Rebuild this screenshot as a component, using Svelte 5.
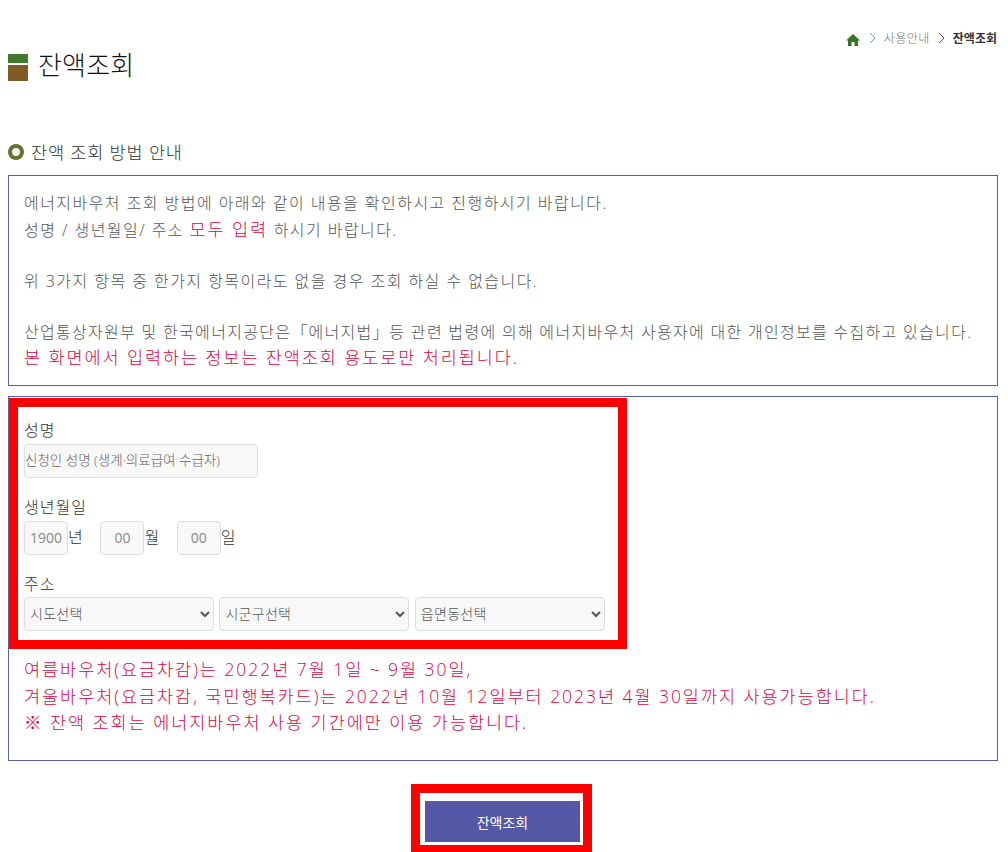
<script>
    const dateFields = [
        { value: '1900', unit: '년' },
        { value: '00', unit: '월' },
        { value: '00', unit: '일' }
    ];
    const selects = ['시도선택', '시군구선택', '읍면동선택'];
</script>

<div class="page">
    <nav class="crumbs">
        <svg class="home" viewBox="0 0 14 12" width="14" height="12"><path d="M7 0 L14 6.5 L12 6.5 L12 12 L8.5 12 L8.5 8 L5.5 8 L5.5 12 L2 12 L2 6.5 L0 6.5 Z" fill="#3a7228"/></svg>
        <svg class="sep" viewBox="0 0 7 12" width="7" height="12"><path d="M1 1 L6 6 L1 11" fill="none" stroke="#6a9ac8" stroke-width="1"/></svg>
        <span class="crumb">사용안내</span>
        <svg class="sep" viewBox="0 0 7 12" width="7" height="12"><path d="M1 1 L6 6 L1 11" fill="none" stroke="#8a3a8a" stroke-width="1"/></svg>
        <span class="crumb current">잔액조회</span>
    </nav>

    <h1><span class="mark"><i></i><b></b></span>잔액조회</h1>

    <h2><span class="ring"></span>잔액 조회 방법 안내</h2>

    <section class="box info">
        <p>에너지바우처 조회 방법에 아래와 같이 내용을 확인하시고 진행하시기 바랍니다.</p>
        <p>성명 / 생년월일/ 주소 <em class="big">모두 입력</em> 하시기 바랍니다.</p>
        <p>&nbsp;</p>
        <p>위 3가지 항목 중 한가지 항목이라도 없을 경우 조회 하실 수 없습니다.</p>
        <p>&nbsp;</p>
        <p class="long">산업통상자원부 및 한국에너지공단은<span class="law">「에너지법」 등</span> 관련 법령에 의해 에너지바우처 사용자에 대한 개인정보를 수집하고 있습니다.</p>
        <p class="closing"><em class="big">본 화면에서 입력하는 정보는 잔액조회 용도로만 처리됩니다.</em></p>
    </section>

    <section class="box form">
        <div class="annot annot-form"></div>
        <label class="field-label" for="name">성명</label>
        <input id="name" class="name" placeholder="신청인 성명 (생계·의료급여 수급자)" />

        <div class="field-label birth">생년월일</div>
        <div class="dates">
            {#each dateFields as f}
                <span class="date"><input value={f.value} /><span class="unit">{f.unit}</span></span>
            {/each}
        </div>

        <div class="field-label addr">주소</div>
        <div class="selects">
            {#each selects as s}
                <select><option>{s}</option></select>
            {/each}
        </div>

        <div class="notice">
            <p>여름바우처(요금차감)는 2022년 7월 1일 ~ 9월 30일,</p>
            <p>겨울바우처(요금차감, 국민행복카드)는 2022년 10월 12일부터 2023년 4월 30일까지 사용가능합니다.</p>
            <p>※ 잔액 조회는 에너지바우처 사용 기간에만 이용 가능합니다.</p>
        </div>
    </section>

    <div class="actions">
        <div class="annot annot-btn"></div>
        <button>잔액조회</button>
    </div>
</div>

<style>
    :global(body) {
        margin: 0;
        background: #fff;
        overflow: hidden;
    }

    .page {
        position: relative;
        height: 852px;
        overflow: hidden;
        padding: 0 10px 0 8px;
        font-family: "Open Sans", "Noto Sans CJK KR", sans-serif;
        font-weight: 300;
        color: #555;
    }

    .crumbs {
        display: flex;
        justify-content: flex-end;
        align-items: center;
        gap: 8px;
        height: 20px;
        padding: 28px 1px 1px 0;
        font-size: 12px;
    }

    .home {
        margin-top: 3px;
        margin-right: 1px;
    }

    .crumb {
        color: #777;
        letter-spacing: 0.5px;
    }

    .crumb.current {
        color: #333;
        font-weight: 700;
        letter-spacing: 0;
    }

    h1 {
        display: flex;
        align-items: center;
        gap: 10px;
        height: 36px;
        margin: -3px 0 0;
        font-size: 26px;
        font-weight: 300;
        letter-spacing: 0.2px;
        color: #111;
    }

    .mark {
        display: flex;
        flex-direction: column;
        gap: 2px;
        width: 20px;
        margin-top: 6px;
    }

    .mark i {
        height: 9px;
        background: #417a2d;
    }

    .mark b {
        height: 16px;
        background: #7f5c25;
    }

    h2 {
        display: flex;
        align-items: center;
        gap: 7px;
        height: 24px;
        margin: 57px 0 12px;
        font-size: 17.5px;
        font-weight: 300;
        letter-spacing: 0.85px;
        color: #333;
    }

    .ring {
        box-sizing: border-box;
        width: 16px;
        height: 16px;
        margin-top: 2px;
        border: 4px solid #66702e;
        border-radius: 50%;
    }

    .box {
        box-sizing: border-box;
        border: 1px solid #5560a8;
        padding: 15px 15px;
    }

    .info {
        height: 211px;
    }

    p {
        margin: 0;
        font-size: 16px;
        line-height: 25.6px;
        letter-spacing: 1.45px;
        white-space: nowrap;
    }

    p.long {
        letter-spacing: 1.3px;
    }

    p.closing {
        margin-top: -1px;
    }

    .law {
        word-spacing: -6px;
    }

    em {
        font-style: normal;
        color: #e3003f;
    }

    .big {
        font-size: 17.5px;
        letter-spacing: 1.9px;
    }

    .form {
        position: relative;
        height: 365px;
        margin-top: 10px;
        padding: 22px 15px 0;
    }

    .annot {
        position: absolute;
        box-sizing: border-box;
        border: 9px solid #f00;
        pointer-events: none;
    }

    .annot-form {
        left: 0;
        top: 1px;
        width: 618px;
        height: 251px;
    }

    .field-label {
        display: block;
        height: 25px;
        font-size: 16px;
        line-height: 22px;
        letter-spacing: 1px;
        color: #333;
    }

    input {
        box-sizing: border-box;
        height: 34px;
        border: 1px solid #ddd;
        border-radius: 4px;
        background: #f8f8f8;
        font: inherit;
        font-size: 13.5px;
        color: #777;
        padding: 0 0 2px;
    }

    input::placeholder {
        color: #666;
    }

    .name {
        display: block;
        width: 234px;
    }

    .birth {
        margin-top: 18px;
    }

    .dates {
        display: flex;
    }

    .date {
        display: flex;
        align-items: center;
        width: 76.4px;
    }

    .date input {
        width: 44px;
        text-align: center;
        font-size: 14px;
        font-weight: 400;
        color: #888;
    }

    .unit {
        font-size: 16px;
        color: #333;
        margin-top: -4px;
    }

    .addr {
        height: 24px;
        margin-top: 18px;
    }

    .selects {
        display: flex;
        gap: 5.4px;
    }

    select {
        box-sizing: border-box;
        width: 190px;
        height: 34px;
        border: 1px solid #ddd;
        border-radius: 4px;
        background-color: #f8f8f8;
        font: inherit;
        font-size: 14px;
        letter-spacing: 0.3px;
        color: #555;
        padding: 0 1px 2px;
    }

    .notice {
        margin-top: 25px;
    }

    .notice p {
        font-size: 17.5px;
        line-height: 26.5px;
        letter-spacing: 1.95px;
        color: #e3003f;
    }

    .actions {
        position: relative;
        display: flex;
        justify-content: center;
        margin-top: 40px;
    }

    .annot-btn {
        left: 403px;
        top: -17px;
        width: 181px;
        height: 70px;
    }

    button {
        width: 155px;
        height: 41px;
        margin-right: 1px;
        border: 0;
        background: #5558a6;
        color: #fff;
        font: inherit;
        font-size: 14px;
        font-weight: 400;
    }
</style>
